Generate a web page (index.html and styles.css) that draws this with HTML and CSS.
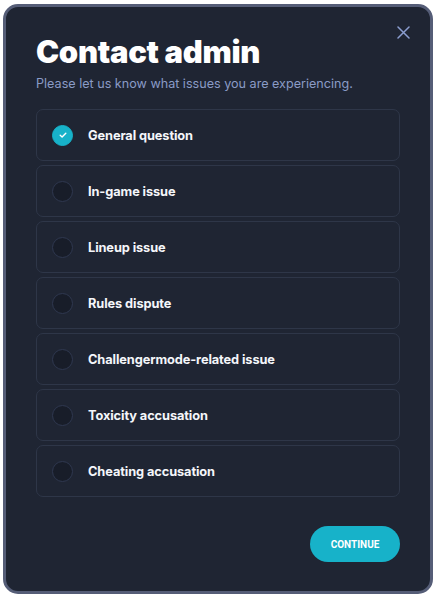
FILE: index.html
```html
<!DOCTYPE html>
<html>
<head>
<meta charset="utf-8">
<link rel="stylesheet" href="styles.css">
</head>
<body>
<div class="modal">
  <button class="close" aria-label="Close">
    <svg width="13" height="13" viewBox="0 0 13 13"><path d="M1 1L12 12M12 1L1 12" stroke="#8b9ed0" stroke-width="1.5" stroke-linecap="round"/></svg>
  </button>
  <h1 class="title">Contact admin</h1>
  <p class="subtitle">Please let us know what issues you are experiencing.</p>
  <div class="options">
    <div class="option selected"><span class="radio"><svg width="10" height="10" viewBox="0 0 10 10"><path d="M2.2 5.3L4.1 7L7.8 3.2" stroke="#fff" stroke-width="1.4" fill="none" stroke-linecap="round" stroke-linejoin="round"/></svg></span><span class="label">General question</span></div>
    <div class="option"><span class="radio"></span><span class="label">In-game issue</span></div>
    <div class="option"><span class="radio"></span><span class="label">Lineup issue</span></div>
    <div class="option"><span class="radio"></span><span class="label">Rules dispute</span></div>
    <div class="option"><span class="radio"></span><span class="label">Challengermode-related issue</span></div>
    <div class="option"><span class="radio"></span><span class="label">Toxicity accusation</span></div>
    <div class="option"><span class="radio"></span><span class="label">Cheating accusation</span></div>
  </div>
  <div class="footer">
    <button class="continue">CONTINUE</button>
  </div>
</div>
</body>
</html>
```

FILE: styles.css
```css
html, body {
  margin: 0;
  padding: 0;
  background: #ffffff;
}
body {
  padding: 4px 3px 0 3px;
  font-family: Inter, "Liberation Sans", sans-serif;
}
.modal {
  position: relative;
  box-sizing: border-box;
  width: 430px;
  height: 590px;
  border: 3px solid #555d77;
  border-radius: 15px;
  background: #1f2533;
  padding: 26px 30px 0 30px;
}
.close {
  position: absolute;
  top: 16px;
  right: 18px;
  width: 18px;
  height: 18px;
  padding: 0;
  border: 0;
  background: transparent;
  display: flex;
  align-items: center;
  justify-content: center;
}
.title {
  margin: 0;
  font-size: 31px;
  line-height: 38px;
  font-weight: 900;
  color: #ffffff;
  letter-spacing: -0.3px;
}
.subtitle {
  margin: 4px 0 0 0;
  font-size: 12.6px;
  line-height: 18px;
  color: #8a9bc6;
}
.options {
  margin-top: 16px;
  display: flex;
  flex-direction: column;
  gap: 4px;
}
.option {
  box-sizing: border-box;
  height: 52px;
  border: 1px solid #2e3648;
  border-radius: 7px;
  display: flex;
  align-items: center;
  padding-left: 15px;
}
.radio {
  box-sizing: border-box;
  width: 21px;
  height: 21px;
  border-radius: 50%;
  border: 1px solid #2f3850;
  background: #181d29;
  display: flex;
  align-items: center;
  justify-content: center;
  flex: none;
}
.option.selected .radio {
  background: #17b2c9;
  border-color: #17b2c9;
}
.label {
  margin-left: 15px;
  font-size: 12.8px;
  font-weight: 700;
  color: #f4f6fa;
  letter-spacing: -0.1px;
}
.footer {
  margin-top: 29px;
  display: flex;
  justify-content: flex-end;
}
.continue {
  width: 90px;
  height: 36px;
  border: 0;
  border-radius: 18px;
  background: #17b2c9;
  color: #ffffff;
  font-family: Roboto, "Liberation Sans", sans-serif;
  font-size: 10px;
  font-weight: 700;
  padding: 0;
}
```
